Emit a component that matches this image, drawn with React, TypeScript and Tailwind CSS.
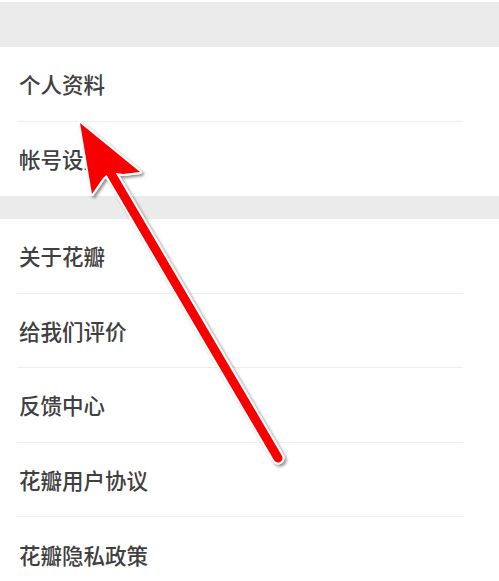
const groups = [
  ["个人资料", "帐号设置"],
  ["关于花瓣", "给我们评价", "反馈中心", "花瓣用户协议", "花瓣隐私政策"],
];

const Row = ({ label, last }: { label: string; last: boolean }) => (
  <div className="h-[74.5px] ml-[17px] w-[446px] flex items-center">
    <div
      className={`h-full w-full flex items-center pl-[2px] ${
        last ? "" : "border-b border-[#eeeeee]"
      }`}
    >
      <span className="text-[21.5px] leading-none font-medium text-[#404040]">{label}</span>
    </div>
  </div>
);

const Arrow = () => (
  <svg
    className="absolute left-0 top-0 pointer-events-none"
    width="499"
    height="581"
    viewBox="0 0 499 581"
  >
    <defs>
      <filter id="shadow" x="-20%" y="-20%" width="140%" height="140%">
        <feGaussianBlur in="SourceAlpha" stdDeviation="1.5" />
        <feOffset dx="1.5" dy="1.5" result="b" />
        <feComponentTransfer>
          <feFuncA type="linear" slope="0.45" />
        </feComponentTransfer>
        <feMerge>
          <feMergeNode />
          <feMergeNode in="SourceGraphic" />
        </feMerge>
      </filter>
    </defs>
    <g filter="url(#shadow)">
      {/* white outline */}
      <line x1="110" y1="172" x2="278" y2="458" stroke="#ffffff" strokeWidth="13" strokeLinecap="round" />
      <path
        d="M80 123 L140 172 L123 174 L110 172 L103 178 L92 194 Z"
        fill="#ffffff"
        stroke="#ffffff"
        strokeWidth="4"
        strokeLinejoin="round"
      />
      {/* red arrow */}
      <line x1="110" y1="172" x2="278" y2="458" stroke="#f80000" strokeWidth="9" strokeLinecap="round" />
      <path d="M80 123 L140 172 L123 174 L110 172 L103 178 L92 194 Z" fill="#f80000" />
    </g>
  </svg>
);

export default function App() {
  return (
    <div
      className="relative w-[499px] h-[581px] overflow-hidden bg-white"
      style={{ fontFamily: '"Noto Sans CJK SC", "Noto Sans", sans-serif' }}
    >
      <div className="h-[2px] bg-white" />
      <div className="h-[45px] bg-[#ebebeb]" />
      <div className="bg-white">
        {groups[0].map((g, i) => (
          <Row key={g} label={g} last={i === groups[0].length - 1} />
        ))}
      </div>
      <div className="h-[23px] bg-[#ebebeb]" />
      <div className="bg-white">
        {groups[1].map((g, i) => (
          <Row key={g} label={g} last={i === groups[1].length - 1} />
        ))}
      </div>
      <Arrow />
    </div>
  );
}
